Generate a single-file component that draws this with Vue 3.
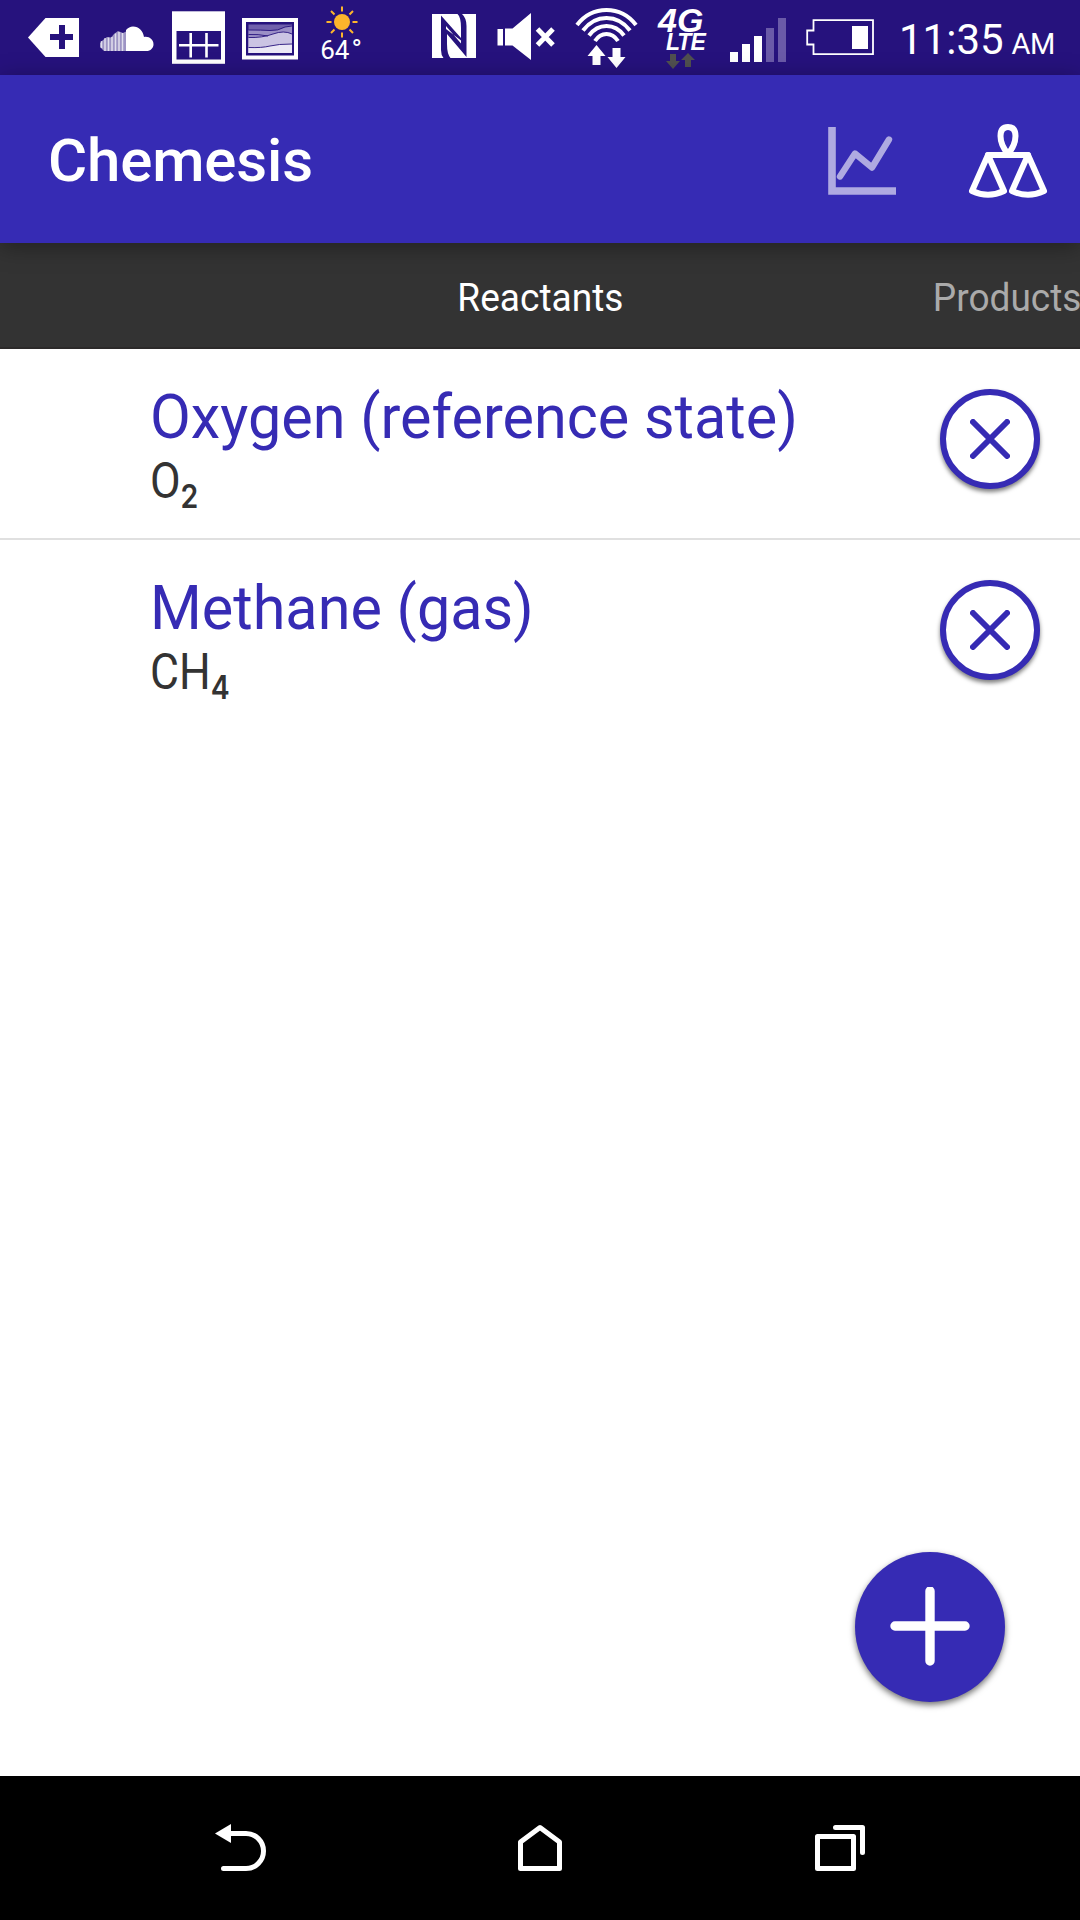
<script setup>
import { ref } from 'vue'

const tabs = ['Reactants', 'Products']
const activeTab = ref('Reactants')

const compounds = ref([
  { id: 1, name: 'Oxygen (reference state)', base: 'O', count: 2 },
  { id: 2, name: 'Methane (gas)', base: 'CH', count: 4 },
])

const signalBars = [
  { x: 0, height: 10, on: true },
  { x: 12, height: 18, on: true },
  { x: 24, height: 26, on: true },
  { x: 36, height: 34, on: false },
  { x: 48, height: 44, on: false },
]

function removeCompound(id) {
  compounds.value = compounds.value.filter(item => item.id !== id)
}
</script>

<template>
  <div class="screen">
    <div class="status-bar">
      <svg class="st-tag" width="51" height="75" viewBox="28 0 51 75">
        <path d="M28 37.500 45.500 18H79V57H45.500Z" fill="#fff" />
        <path d="M50 37H73M62 25V49" stroke="#26127d" stroke-width="6" />
      </svg>
      <svg class="st-cloud" width="54" height="75" viewBox="100 0 54 75">
        <path d="M126 51V30Q129 26.500 133 26.500C139 26.500 143 31 144 37C149 36 153.500 39.500 153.500 44.200C153.500 48 150.500 51 146.500 51Z" fill="#fff" />
        <path d="M126 51V31.500L123 33 118 31 114 34 111 37.500 107 37 103 40 100 43V47L104 51Z" fill="#fff" opacity=".55" />
        <path d="M101.500 41V48M105 38V51M108.500 37.500V51M112 37V51M115.500 33.500V51M119 32V51M122.500 33V51" stroke="#fff" stroke-width="1.500" opacity=".7" />
      </svg>
      <svg class="st-calendar" width="53" height="75" viewBox="171.500 0 53 75">
        <rect x="171.500" y="11.300" width="53" height="52.500" fill="#fff" />
        <rect x="176" y="31" width="44.500" height="28.500" fill="#26127d" />
        <path d="M178.500 45.300H218M190.200 33V57.500M206 33V57.500" stroke="#fff" stroke-width="2.600" />
      </svg>
      <svg class="st-picture" width="56" height="75" viewBox="242 0 56 75">
        <rect x="242" y="18" width="56" height="41.500" fill="#fff" />
        <rect x="246" y="22" width="48" height="33.500" fill="#26127d" />
        <rect x="248.500" y="24.500" width="43.500" height="28.500" fill="#7060ac" />
        <path d="M248.500 30Q262 30 270 30.500T285 27L292 26V53H248.500Z" fill="#9b8fc6" />
        <path d="M248.500 37.500Q262 38 273 34T292 34V53H248.500Z" fill="#cbc4e3" />
        <path d="M248.500 47.500Q262 48 270 46T292 44V53H248.500Z" fill="#ebe8f5" />
        <path d="M248.500 30Q262 30 270 30.500T285 27L292 26M248.500 37.500Q262 38 273 34T292 34M248.500 34.500Q258 34 268 36M248.500 47.500Q262 48 270 46T292 44" fill="none" stroke="#26127d" stroke-width=".9" />
      </svg>
      <div class="weather">
        <svg width="32" height="32" viewBox="-16 -16 32 32">
          <circle r="8" fill="#fdb52c" />
          <path d="M0-15.500V-10.500M0 10.500V15.500M-15.500 0H-10.500M10.500 0H15.500M-11-11-7.500-7.500M11 11 7.500 7.500M-11 11-7.500 7.500M11-11 7.500-7.500" stroke="#fdb52c" stroke-width="2" />
        </svg>
        <span class="temp">64<span class="degree">°</span></span>
      </div>
      <svg class="st-nfc" width="44" height="75" viewBox="432 0 44 75">
        <rect x="432" y="14" width="44" height="44" fill="#fff" />
        <path d="M443.500 58Q441 55 441 50V15.500L461 38V28Q461 17 457.500 14H462Q466.500 18 466.500 26V57L447 34V44Q447 54 450.500 58Z" fill="#26127d" />
        <path d="M446 29V26L461 43.500V40.500Z" fill="#fff" />
      </svg>
      <svg class="st-mute" width="58" height="75" viewBox="497 0 58 75">
        <rect x="497.500" y="29" width="5.500" height="16.500" fill="#fff" />
        <path d="M505 28.500H512.500L531 13V60L512.500 45.500H505Z" fill="#fff" />
        <path d="M537.500 29 553 45M553 29 537.500 45" stroke="#fff" stroke-width="5" />
      </svg>
      <svg class="st-wifi" width="63" height="75" viewBox="574.500 0 63 75">
        <g fill="none" stroke="#fff" stroke-width="4">
          <path d="M576.500 25Q588 10 606 10T635.500 25" />
          <path d="M582.500 30.500Q592 18 606 18T629.500 30.500" />
          <path d="M588.500 35.500Q595.500 26 606 26T623.500 35.500" />
          <path d="M594.500 41Q599 34 606 34T617.500 41" />
        </g>
        <path d="M596 45 605 56H600V65H592V56H587ZM612 48H620V57H625L616 68 607 57H612Z" fill="#fff" />
      </svg>
      <div class="network">
        <span class="net-gen">4G</span>
        <span class="net-type">LTE</span>
        <svg width="29" height="17" viewBox="0 0 29 17">
          <path d="M4 1H10V8H14L7 16 0 8H4ZM22 0 29 7H25V14H19V7H15Z" fill="#505050" />
        </svg>
      </div>
      <svg class="st-signal" width="56" height="75" viewBox="0 0 56 75">
        <rect
          v-for="bar in signalBars"
          :key="bar.x"
          :x="bar.x"
          :y="62 - bar.height"
          width="8"
          :height="bar.height"
          :fill="bar.on ? '#fff' : '#6a5aa8'"
        />
      </svg>
      <svg class="st-battery" width="68" height="75" viewBox="806 0 68 75">
        <path d="M813.500 20.200H873V54.200H813.500V44.500H807.200V30.500H813.500Z" fill="none" stroke="#fff" stroke-width="1.800" />
        <rect x="852" y="26" width="16" height="23" fill="#fff" />
      </svg>
      <div class="clock">11:35<span class="meridiem">AM</span></div>
    </div>

    <header class="app-bar">
      <h1 class="title">Chemesis</h1>
      <svg class="action-chart" width="70" height="80" viewBox="828 120 70 80">
        <path d="M832 127V191H896" fill="none" stroke="#afaae1" stroke-width="7.600" />
        <path d="M840 176.500 855 153.500 872 167.500 889 139.500" fill="none" stroke="#afaae1" stroke-width="6.400" stroke-linecap="round" stroke-linejoin="round" />
      </svg>
      <svg class="action-balance" width="80" height="80" viewBox="968 120 80 80">
        <g fill="none" stroke="#fff" stroke-width="6" stroke-linecap="round" stroke-linejoin="round">
          <path d="M1008 154C1003 148 1000.500 142 1000.500 136C1000.500 130 1003 127 1008 127C1013 127 1015.500 130 1015.500 136C1015.500 142 1013 148 1008 154Z" />
          <path d="M988 155H1028" />
          <path d="M988 155 972 191Q988 198.500 1004 191Z" />
          <path d="M1028 155 1012 191Q1028 198.500 1044 191Z" />
        </g>
      </svg>
    </header>

    <nav class="tabs">
      <span
        v-for="tab in tabs"
        :key="tab"
        class="tab"
        :class="{ active: tab === activeTab }"
        @click="activeTab = tab"
      >{{ tab }}</span>
    </nav>

    <main class="content">
      <div v-for="item in compounds" :key="item.id" class="row">
        <div class="info">
          <div class="name">{{ item.name }}</div>
          <div class="formula">{{ item.base }}<sub>{{ item.count }}</sub></div>
        </div>
        <button class="remove" @click="removeCompound(item.id)">
          <svg width="40" height="40" viewBox="-20 -20 40 40">
            <path d="M-17-17 17 17M17-17-17 17" stroke="#362bb4" stroke-width="6" stroke-linecap="round" />
          </svg>
        </button>
      </div>
      <button class="fab">
        <svg width="80" height="80" viewBox="-40 -39 80 80">
          <path d="M-35 0H35M0-35V35" stroke="#fff" stroke-width="9.400" stroke-linecap="round" />
        </svg>
      </button>
    </main>

    <footer class="nav-bar">
      <svg width="60" height="60" viewBox="0 0 60 60">
        <path d="M20 15.500H36A17.500 17.500 0 0 1 36 50.500H13.500" fill="none" stroke="#fff" stroke-width="5" stroke-linecap="round" />
        <path d="M5 15.500 21 6V25Z" fill="#fff" />
      </svg>
      <svg width="60" height="60" viewBox="0 0 60 60">
        <path d="M30 9.500 49.500 24V50.500H10.500V24Z" fill="none" stroke="#fff" stroke-width="5" stroke-linejoin="round" />
      </svg>
      <svg width="60" height="60" viewBox="0 0 60 60">
        <g fill="none" stroke="#fff" stroke-width="5" stroke-linecap="round" stroke-linejoin="round">
          <rect x="7.500" y="18.500" width="36" height="32" />
          <path d="M25.500 9.500H52.500V34.500" />
        </g>
      </svg>
    </footer>
  </div>
</template>

<style>
body {
  margin: 0;
}
</style>

<style scoped>
.screen {
  width: 1080px;
  height: 1920px;
  display: flex;
  flex-direction: column;
  overflow: hidden;
  background: #fff;
  font-family: Roboto, "Noto Sans", sans-serif;
}

svg {
  display: block;
  flex: none;
}

button {
  padding: 0;
  border: none;
  display: flex;
  align-items: center;
  justify-content: center;
}

.status-bar {
  height: 75px;
  display: flex;
  padding-left: 28px;
  background: #26127d;
  color: #fff;
}

.st-cloud {
  margin-left: 21px;
}

.st-calendar {
  margin-left: 17.5px;
}

.st-picture {
  margin-left: 17.5px;
}

.weather {
  width: 48px;
  margin-left: 20px;
  padding-top: 6px;
  display: flex;
  flex-direction: column;
  align-items: center;
}

.temp {
  margin-left: -2px;
  font-size: 26px;
  line-height: 24px;
  white-space: nowrap;
}

.degree {
  margin-left: 2px;
  font-size: 28px;
  line-height: 0;
}

.st-nfc {
  margin-left: 66px;
}

.st-mute {
  margin-left: 21px;
}

.st-wifi {
  margin-left: 19.5px;
}

.network {
  width: 52px;
  margin-left: 19.5px;
  display: flex;
  flex-direction: column;
  font-family: "Liberation Sans", sans-serif;
  font-style: italic;
  font-weight: 700;
}

.net-gen {
  margin-top: 6px;
  padding-left: 1px;
  font-size: 34px;
  line-height: 28px;
}

.net-type {
  padding-left: 9px;
  font-size: 23px;
  line-height: 17px;
  letter-spacing: -1px;
}

.network svg {
  margin-top: 2px;
  margin-left: 9px;
}

.st-signal {
  margin-left: 21px;
}

.st-battery {
  margin-left: 20px;
}

.clock {
  margin-left: 25px;
  font-size: 42px;
  line-height: 79px;
  white-space: nowrap;
}

.meridiem {
  margin-left: 8px;
  font-size: 29px;
  letter-spacing: -0.5px;
}

.app-bar {
  position: relative;
  height: 168px;
  box-sizing: border-box;
  display: flex;
  align-items: center;
  padding: 2px 32px 0 48px;
  background: #362bb4;
  box-shadow: 0 4px 22px rgba(0, 0, 0, 0.35);
}

.title {
  flex: 1;
  margin: 0;
  padding-top: 2px;
  font-size: 60px;
  font-weight: 500;
  line-height: 84px;
  letter-spacing: -0.15px;
  color: #fff;
}

.action-balance {
  margin-left: 70px;
}

.tabs {
  height: 98px;
  display: flex;
  align-items: center;
  justify-content: flex-end;
  padding-top: 6px;
  background: #333;
  border-bottom: 2px solid #2c2a2a;
}

.tab {
  margin-right: -1px;
  font-size: 39px;
  line-height: 52px;
  color: #aaa;
  white-space: nowrap;
  transform: scaleX(0.95);
  transform-origin: right;
}

.tab.active {
  margin-right: 297px;
  color: #fff;
  transform-origin: center;
}

.content {
  flex: 1;
  position: relative;
}

.row {
  height: 189px;
  display: flex;
  justify-content: space-between;
  padding: 0 40px 0 150px;
  border-bottom: 2px solid #e0e0e0;
}

.row:last-of-type {
  border-bottom: none;
}

.info {
  padding-top: 31px;
}

.name {
  font-size: 62px;
  line-height: 74px;
  color: #362bb4;
  white-space: nowrap;
  transform: scaleX(0.957);
  transform-origin: left;
}

.formula {
  font-size: 50px;
  line-height: 54px;
  color: #333;
  transform: scaleX(0.89);
  transform-origin: left;
}

.formula sub {
  position: relative;
  top: 10px;
  vertical-align: baseline;
  font-family: Inter, sans-serif;
  font-size: 32px;
  font-weight: 600;
  line-height: 0;
}

.remove {
  box-sizing: border-box;
  width: 100px;
  height: 100px;
  margin-top: 40px;
  border: 6px solid #362bb4;
  border-radius: 50%;
  background: #fff;
  box-shadow: 0 3px 4px rgba(0, 0, 0, 0.5);
}

.fab {
  position: absolute;
  right: 75px;
  bottom: 74px;
  width: 150px;
  height: 150px;
  border-radius: 50%;
  background: #362bb4;
  box-shadow: 0 3px 6px rgba(0, 0, 0, 0.55);
}

.nav-bar {
  height: 144px;
  display: flex;
  align-items: center;
  justify-content: center;
  gap: 240px;
  background: #000;
}
</style>
